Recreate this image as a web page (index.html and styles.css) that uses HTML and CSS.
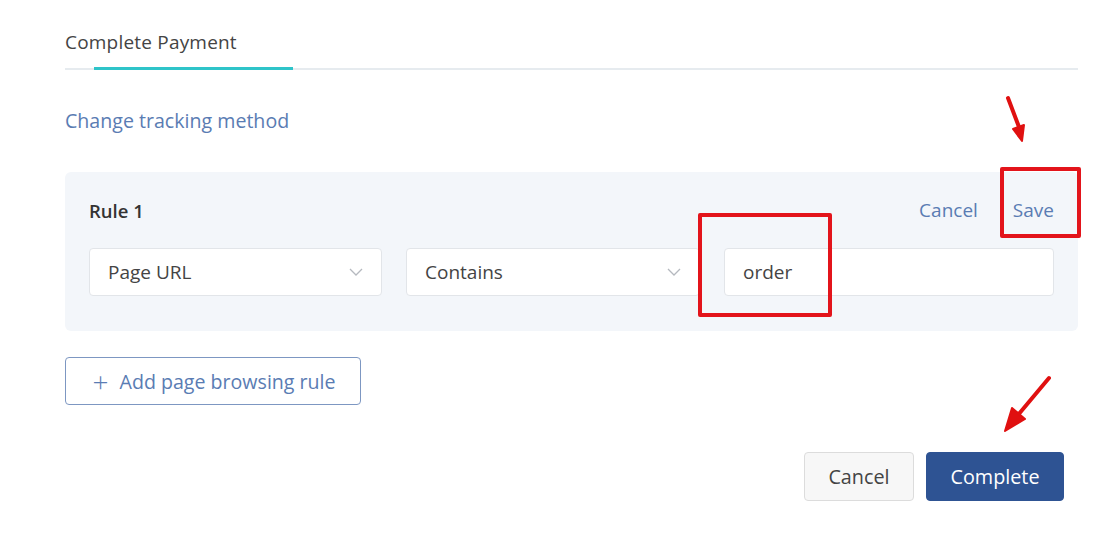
FILE: index.html
```html
<!DOCTYPE html>
<html lang="en">
<head>
  <meta charset="UTF-8">
  <meta name="viewport" content="width=device-width, initial-scale=1.0">
  <title>Complete Payment</title>
  <link rel="stylesheet" href="styles.css">
</head>
<body>

  <div class="page">
    <div class="tabs">
      <div class="tab active">Complete Payment</div>
    </div>

    <a class="change-link" href="#">Change tracking method</a>

    <div class="rule-panel">
      <div class="rule-head">
        <span class="rule-title">Rule 1</span>
        <div class="rule-actions">
          <a href="#">Cancel</a>
          <a href="#">Save</a>
        </div>
      </div>
      <div class="rule-fields">
        <div class="select sel-1">
          <span>Page URL</span>
          <svg width="14" height="8" viewBox="0 0 14 8"><path d="M1 1l6 6 6-6" fill="none" stroke="#b5b9bf" stroke-width="1.3"/></svg>
        </div>
        <div class="select sel-2">
          <span>Contains</span>
          <svg width="14" height="8" viewBox="0 0 14 8"><path d="M1 1l6 6 6-6" fill="none" stroke="#b5b9bf" stroke-width="1.3"/></svg>
        </div>
        <div class="text-input">order</div>
      </div>
    </div>

    <button class="add-rule"><span class="plus">+</span> Add page browsing rule</button>

    <div class="footer">
      <button class="btn-cancel">Cancel</button>
      <button class="btn-complete">Complete</button>
    </div>

    <!-- red annotations from the screenshot -->
    <div class="mark mark-order"></div>
    <div class="mark mark-save"></div>
    <svg class="arrow arrow-save" width="40" height="60" viewBox="0 0 40 60">
      <path d="M8 12 L19 41" stroke="#e01010" stroke-width="4" stroke-linecap="round"/>
      <path d="M13 43 L24 39 L22 55 Z" fill="#e01010" stroke="#e01010" stroke-width="2" stroke-linejoin="round"/>
    </svg>
    <svg class="arrow arrow-complete" width="60" height="70" viewBox="0 0 60 70">
      <path d="M54 8 L23 45" stroke="#e01010" stroke-width="4" stroke-linecap="round"/>
      <path d="M17 38 L30 49 L10 61 Z" fill="#e01010" stroke="#e01010" stroke-width="2" stroke-linejoin="round"/>
    </svg>
  </div>

</body>
</html>
```

FILE: styles.css
```css
body {
  margin: 0;
  font-family: "Open Sans", "Noto Sans", Arial, sans-serif;
  background-color: #fff;
  color: #333;
}

.page {
  position: relative;
  width: 1013px;
  margin-left: 65px;
  padding-top: 26px;
}

.tabs {
  border-bottom: 2px solid #e6ebef;
  height: 42px;
}

.tab {
  position: relative;
  display: inline-block;
  font-size: 19px;
  letter-spacing: 0.2px;
  color: #444;
  line-height: 32px;
}

.tab.active::after {
  content: "";
  position: absolute;
  left: 29px;
  width: 199px;
  top: 41px;
  height: 3px;
  background-color: #2ec4c9;
}

.change-link {
  display: inline-block;
  margin-top: 37px;
  font-size: 19.6px;
  color: #5a7cb3;
  text-decoration: none;
}

.rule-panel {
  margin-top: 38px;
  background-color: #f3f6fa;
  border-radius: 6px;
  padding: 23px 24px 35px;
}

.rule-head {
  display: flex;
  justify-content: space-between;
  align-items: center;
  height: 30px;
}

.rule-title {
  font-size: 18.5px;
  font-weight: 600;
  color: #333;
}

.rule-actions {
  display: flex;
  gap: 35px;
}

.rule-actions a {
  font-size: 19px;
  color: #5a7cb3;
  text-decoration: none;
}

.rule-fields {
  display: flex;
  gap: 24px;
  margin-top: 23px;
}

.select, .text-input {
  box-sizing: border-box;
  height: 48px;
  background-color: #fff;
  border: 1px solid #e2e5e9;
  border-radius: 4px;
  display: flex;
  align-items: center;
  justify-content: space-between;
  padding: 0 18px;
  font-size: 19px;
  color: #444;
}

.sel-1 { width: 293px; }
.sel-2 { width: 294px; }
.text-input { width: 330px; }

.add-rule {
  margin-top: 26px;
  box-sizing: border-box;
  width: 296px;
  height: 48px;
  padding: 0 0 0 2px;
  background-color: #fff;
  border: 1px solid #7d97c2;
  border-radius: 4px;
  font-family: inherit;
  font-size: 19.6px;
  color: #5a7cb3;
  cursor: pointer;
}

.add-rule .plus {
  font-size: 28px;
  font-weight: 300;
  line-height: 20px;
  vertical-align: -3px;
  margin-right: 6px;
}

.footer {
  display: flex;
  justify-content: flex-end;
  gap: 12px;
  margin-top: 47px;
  padding-right: 14px;
}

.footer button {
  box-sizing: border-box;
  height: 49px;
  border-radius: 4px;
  font-family: inherit;
  font-size: 19.8px;
  cursor: pointer;
}

.btn-cancel {
  width: 110px;
  background-color: #f7f7f7;
  border: 1px solid #dcdcdc;
  color: #444;
}

.btn-complete {
  width: 138px;
  background-color: #2e5393;
  border: 1px solid #2e5393;
  color: #fff;
}

.mark {
  position: absolute;
  border: 4px solid #e3141b;
  border-radius: 2px;
}

.mark-order {
  left: 633px;
  top: 213px;
  width: 126px;
  height: 96px;
}

.mark-save {
  left: 935px;
  top: 167px;
  width: 73px;
  height: 63px;
}

.arrow {
  position: absolute;
}

.arrow-save {
  left: 935px;
  top: 86px;
}

.arrow-complete {
  left: 930px;
  top: 370px;
}
```
